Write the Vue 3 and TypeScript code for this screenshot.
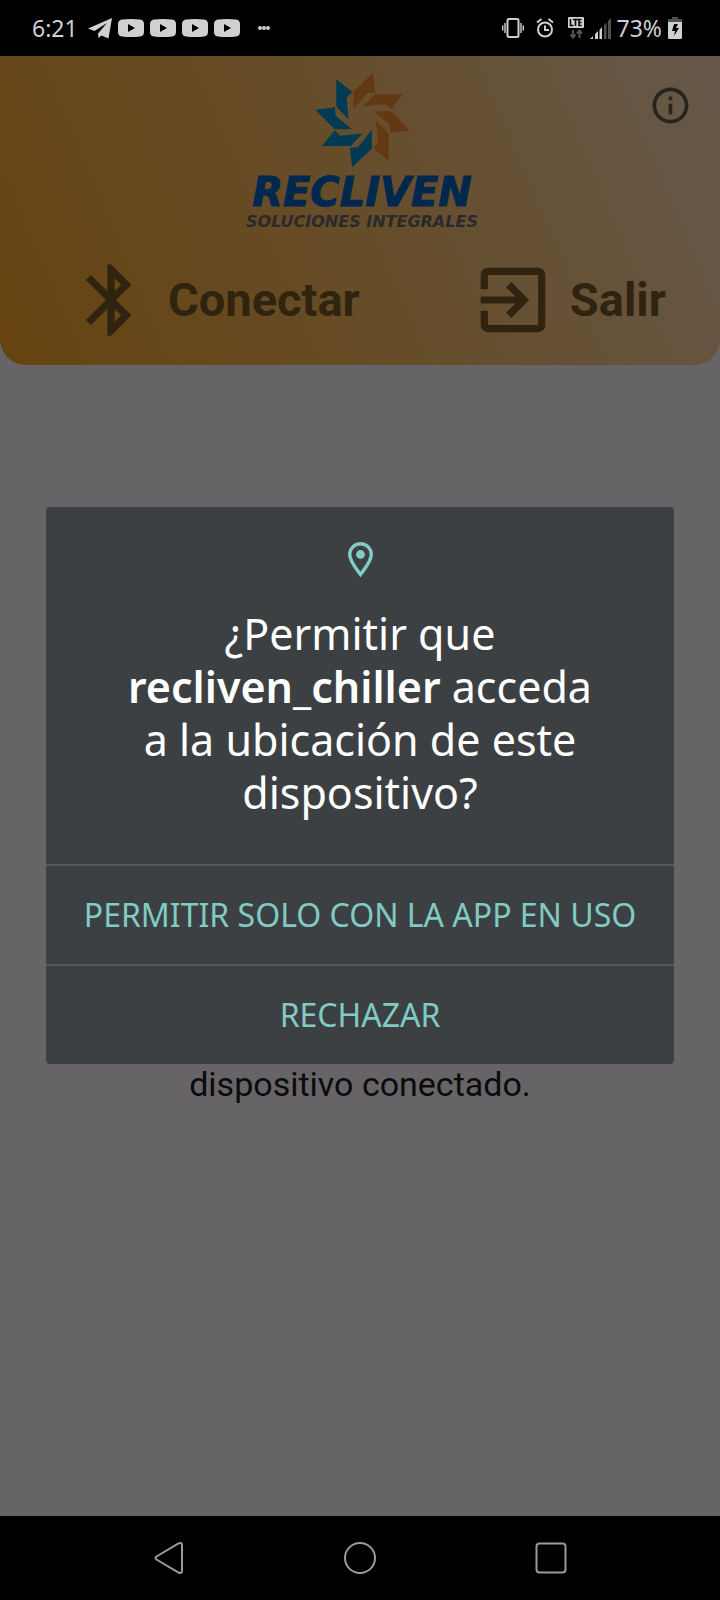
<script setup lang="ts">
const videoNotices: number[] = [1, 2, 3, 4]

const petals: { points: string; tone: string }[] = [
  { points: '319,57 367,95 350,113 356,178 319,139', tone: 'blue' },
  { points: '256,149 315,141 317,167 366,207 314,207', tone: 'blue' },
  { points: '314,210 330,227 398,220 362,258 276,258', tone: 'blue' },
  { points: '426,209 426,266 367,322 360,262 384,262', tone: 'blue' },
  { points: '430,38 436,98 412,98 371,148 371,94', tone: 'orange' },
  { points: '436,102 519,102 484,148 467,132 400,139', tone: 'orange' },
  { points: '430,153 484,153 540,211 481,218 480,194', tone: 'orange' },
  { points: '438,182 477,220 477,302 430,264 446,248', tone: 'orange' },
]
</script>

<template>
  <div class="phone">
    <div class="status">
      <div class="status-side">
        <span class="status-text">6:21</span>
        <svg class="telegram" viewBox="0 0 24 21" width="24" height="21" aria-hidden="true">
          <path d="M0 10.500 24 0 20.500 20.500 13.500 17.500 10.500 20 10 15.500 19 5 6.500 13Z" />
        </svg>
        <svg v-for="n in videoNotices" :key="n" viewBox="0 0 26 18" width="26" height="18" aria-hidden="true">
          <path fill-rule="evenodd" d="M4 0.500Q13-0.500 22 0.500 26 1 26 5V13Q26 17 22 17.500 13 18.500 4 17.500 0 17 0 13V5Q0 1 4 0.500ZM10 5V13L17 9Z" />
        </svg>
        <svg class="more" viewBox="0 0 12 4" width="12" height="4" aria-hidden="true">
          <circle cx="2" cy="2" r="2" /><circle cx="6" cy="2" r="2" /><circle cx="10" cy="2" r="2" />
        </svg>
      </div>
      <div class="status-side right">
        <svg viewBox="0 0 22 20" width="22" height="20" aria-hidden="true">
          <rect x="5.500" y="1" width="11" height="18" rx="1.500" class="line" />
          <path class="line thin" d="M3 5V15M19 5V15M0.700 7.500V12.500M21.300 7.500V12.500" />
        </svg>
        <svg class="alarm" viewBox="0 0 18 20" width="18" height="20" aria-hidden="true">
          <circle cx="9" cy="11.500" r="7" class="line" />
          <path class="line" d="M9 7.500V12H13M1 4.500 5.500 1M17 4.500 12.500 1" />
        </svg>
        <svg class="lte" viewBox="0 0 16 22" width="16" height="22" aria-hidden="true">
          <rect x="0" y="0" width="16" height="11" rx="1" />
          <path class="cut" d="M2.500 2V8.500H5.500M5 2.500H10M7.500 2.500V9M13.500 2.500H11V8.500H13.500M11 5.500H13.500" />
          <path class="dim" d="M5 13V20M2.500 17.500 5 20.500 7.500 17.500M11.500 21V14M9 16.500 11.500 13.500 14 16.500" />
        </svg>
        <svg class="signal" viewBox="0 0 21 21" width="21" height="21" aria-hidden="true">
          <path d="M0 21 3 18V21ZM5 21V16L8 13V21ZM9.500 21V12L12 9V21Z" />
          <path class="faint" d="M14 21V7L16.500 4.500V21ZM18 21V3L21 0V21Z" />
        </svg>
        <span class="status-text">73%</span>
        <svg class="battery" viewBox="0 0 14 22" width="14" height="22" aria-hidden="true">
          <path class="faint" d="M4 0H10V2H14V5H0V2H4Z" />
          <path fill-rule="evenodd" d="M0 5H14V20.500Q14 22 12.500 22H1.500Q0 22 0 20.500ZM6 7 4 14H7L6 19 11 11H8L10 7Z" />
        </svg>
      </div>
    </div>

    <div class="app">
      <header class="top">
        <button class="info" type="button" aria-label="Información">
          <svg viewBox="0 0 24 24" width="43" height="43" aria-hidden="true">
            <path d="M11 7h2v2h-2zm0 4h2v6h-2zm1-9C6.480 2 2 6.480 2 12s4.480 10 10 10 10-4.480 10-10S17.520 2 12 2zm0 18c-4.410 0-8-3.590-8-8s3.590-8 8-8 8 3.590 8 8-3.590 8-8 8z" />
          </svg>
        </button>
        <div class="brand">
          <svg viewBox="255 38 286 286" width="95" height="95" aria-hidden="true">
            <polygon v-for="p in petals" :key="p.points" :points="p.points" :class="p.tone" />
          </svg>
          <span class="brand-name">RECLIVEN</span>
          <span class="brand-line">SOLUCIONES INTEGRALES</span>
        </div>
        <nav class="actions">
          <button class="action" type="button">
            <svg viewBox="0 0 24 24" width="86" height="86" aria-hidden="true">
              <path d="M17.710 7.710L12 2h-1v7.590L6.410 5 5 6.410 10.590 12 5 17.590 6.410 19 11 14.410V22h1l5.710-5.710-4.300-4.290 4.300-4.290zM13 5.830l1.880 1.880L13 9.590V5.830zm1.880 10.460L13 18.170v-3.760l1.880 1.880z" />
            </svg>
            Conectar
          </button>
          <button class="action" type="button">
            <svg viewBox="0 0 24 24" width="86" height="86" aria-hidden="true">
              <path d="M10.090 15.590L11.500 17l5-5-5-5-1.410 1.410L12.670 11H3v2h9.670l-2.580 2.590zM19 3H5c-1.110 0-2 .9-2 2v4h2V5h14v14H5v-4H3v4c0 1.100.89 2 2 2h14c1.100 0 2-.9 2-2V5c0-1.100-.9-2-2-2z" />
            </svg>
            Salir
          </button>
        </nav>
      </header>

      <main class="content">
        <p class="message">dispositivo conectado.</p>
      </main>

      <div class="overlay">
        <section class="dialog" role="dialog" aria-labelledby="dialog-title">
          <div class="question">
            <svg viewBox="0 0 25 35" width="25" height="35" aria-hidden="true">
              <path class="pin" d="M12.500 1.700C6.500 1.700 1.700 6.500 1.700 12.500 1.700 19.500 9 27.500 12.500 32.500 16 27.500 23.300 19.500 23.300 12.500 23.300 6.500 18.500 1.700 12.500 1.700Z" />
              <circle class="pin-dot" cx="12.500" cy="12.500" r="4.400" />
            </svg>
            <h1 id="dialog-title">¿Permitir que<br><strong>recliven_chiller</strong> acceda<br>a la ubicación de este<br>dispositivo?</h1>
          </div>
          <button class="choice" type="button">PERMITIR SOLO CON LA APP EN USO</button>
          <button class="choice" type="button">RECHAZAR</button>
        </section>
      </div>
    </div>

    <nav class="system-nav">
      <button type="button" aria-label="Atrás">
        <svg viewBox="0 0 32 32" width="32" height="32"><path d="M25.500 1.500Q29 0 29 3V29Q29 32 25.500 30.500L3.500 17.500Q1.500 16 3.500 14.500Z" /></svg>
      </button>
      <button type="button" aria-label="Inicio">
        <svg viewBox="0 0 32 32" width="32" height="32"><circle cx="16" cy="16" r="15" /></svg>
      </button>
      <button type="button" aria-label="Recientes">
        <svg viewBox="0 0 32 32" width="32" height="32"><rect x="1.500" y="1.500" width="29" height="29" rx="3" /></svg>
      </button>
    </nav>
  </div>
</template>

<style>
body {
  margin: 0;
  background: #000;
}
</style>

<style scoped>
.phone {
  display: flex;
  flex-direction: column;
  min-height: 100vh;
  font-family: "Noto Sans", "Open Sans", sans-serif;
}

button {
  padding: 0;
  border: 0;
  background: none;
  font: inherit;
  cursor: pointer;
}

svg {
  display: block;
  flex: none;
}

.status {
  display: flex;
  align-items: center;
  justify-content: space-between;
  box-sizing: border-box;
  height: 56px;
  padding: 0 38px 0 32px;
  background: #000;
  color: #d0d0d0;
}

.status svg {
  fill: #d0d0d0;
}

.status-side {
  display: flex;
  align-items: center;
  gap: 6px;
}

.status-text {
  font-size: 23px;
  line-height: 32px;
}

.telegram {
  margin-left: 4px;
}

.more {
  margin-left: 12px;
}

.right {
  gap: 6px;
}

.alarm {
  margin: 0 8px 0 6px;
}

.status .line {
  fill: none;
  stroke: #d0d0d0;
  stroke-width: 2;
}

.status .thin {
  stroke-width: 1.4;
}

.status .cut {
  fill: none;
  stroke: #000;
  stroke-width: 1.6;
}

.status .dim {
  fill: none;
  stroke: #555;
  stroke-width: 2;
}

.status .faint {
  fill: #505050;
}

.app {
  position: relative;
  display: flex;
  flex: 1;
  flex-direction: column;
  background: #676467;
}

.top {
  position: relative;
  display: flex;
  flex-direction: column;
  padding: 17px 0 22px;
  border-radius: 0 0 26px 26px;
  background: linear-gradient(67deg, #664310, #664d2a 50%, #66584a);
}

.info {
  position: absolute;
  top: 28px;
  right: 28px;
}

.info svg {
  fill: #28231c;
}

.brand {
  display: flex;
  flex-direction: column;
  align-items: center;
  padding-left: 4px;
}

.blue {
  fill: #003b53;
}

.orange {
  fill: #623912;
}

.brand-name,
.brand-line {
  font-family: "DejaVu Sans", sans-serif;
  font-weight: 700;
  font-style: italic;
}

.brand-name {
  margin-top: 4px;
  color: #00284f;
  font-size: 40px;
  line-height: 40px;
  -webkit-text-stroke: 1px #00284f;
}

.brand-line {
  color: #2a2a2c;
  font-size: 16px;
  line-height: 20px;
}

.actions {
  display: flex;
  justify-content: space-between;
  margin-top: 25px;
  padding: 0 54px 0 68px;
}

.action {
  display: flex;
  align-items: center;
  gap: 14px;
  color: #30230f;
  font-family: Roboto, sans-serif;
  font-size: 47px;
  font-weight: 700;
  line-height: 56px;
}

.action svg {
  fill: currentColor;
}

.content {
  flex: 1;
  padding-top: 699px;
}

.message {
  margin: 0;
  color: #0c0b0c;
  font-family: Roboto, sans-serif;
  font-size: 34px;
  line-height: 40px;
  text-align: center;
}

.overlay {
  position: absolute;
  inset: 0;
  display: flex;
  align-items: center;
  padding: 0 46px 2px;
}

.dialog {
  flex: 1;
  overflow: hidden;
  border-radius: 4px;
  background: #3d4043;
}

.question {
  display: flex;
  flex-direction: column;
  align-items: center;
  padding: 35px 24px 45px;
}

.pin {
  fill: none;
  stroke: #80cbc4;
  stroke-width: 3.4;
}

.pin-dot {
  fill: #80cbc4;
}

h1 {
  margin: 30px 0 0;
  color: #fff;
  font-size: 43px;
  font-weight: 400;
  line-height: 53px;
  text-align: center;
}

strong {
  font-weight: 600;
}

.choice {
  display: block;
  width: 100%;
  border-top: 2px solid #54585b;
  color: #80cbc4;
  font-size: 32px;
  line-height: 98px;
  text-align: center;
}

.system-nav {
  display: flex;
  align-items: center;
  justify-content: space-between;
  height: 84px;
  padding: 0 153px;
  background: #000;
}

.system-nav svg {
  fill: none;
  stroke: #9a9a9a;
  stroke-width: 2;
}
</style>
